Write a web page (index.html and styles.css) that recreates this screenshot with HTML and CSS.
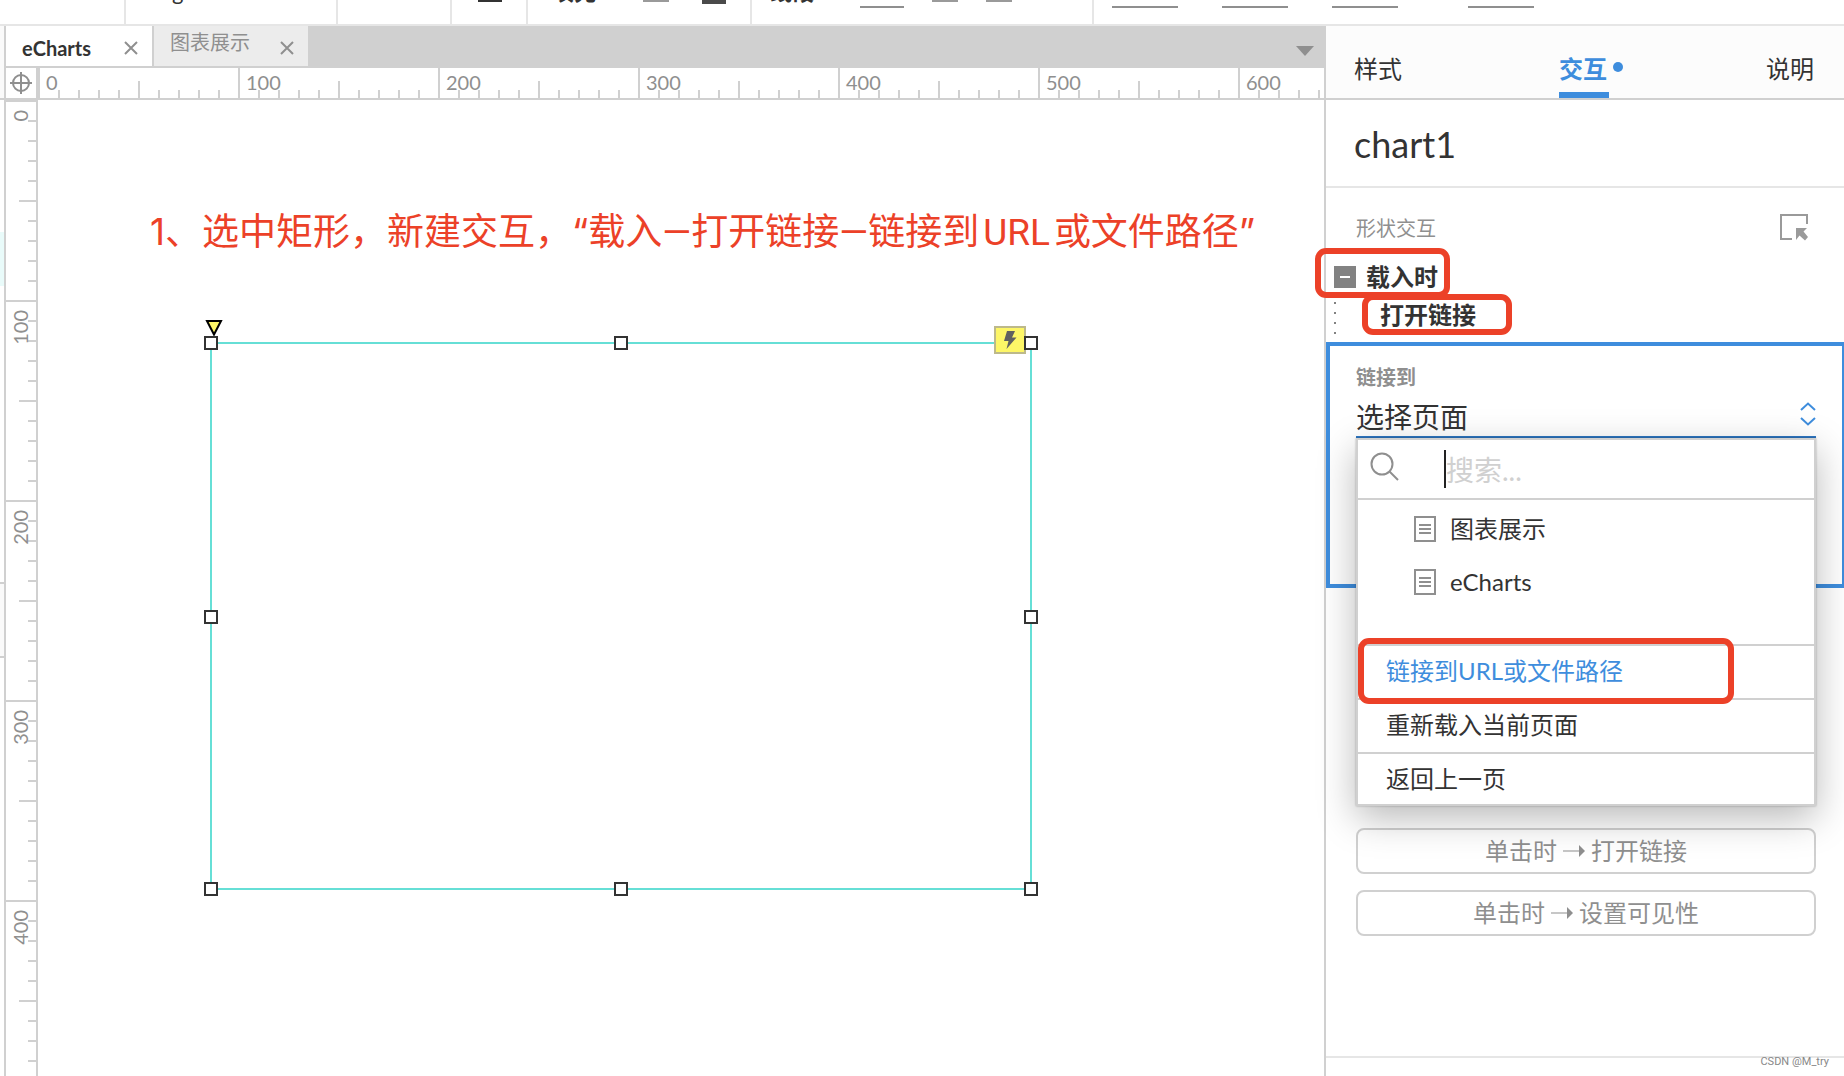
FILE: index.html
```html
<!DOCTYPE html>
<html lang="zh-CN">
<head>
<meta charset="utf-8">
<meta name="viewport" content="width=device-width, initial-scale=1">
<title>eCharts</title>
<link rel="stylesheet" href="styles.css">
</head>
<body>
<div class="app">
  <header class="toolbar">
    <div class="group g-nav"></div>
    <div class="group g-font"><span class="tool-text">g</span></div>
    <div class="group g-size"></div>
    <div class="group g-color"><i class="swatch ink"></i></div>
    <div class="group g-fill"><b class="tool-text">填充</b><i class="swatch"></i><i class="swatch dark"></i></div>
    <div class="group g-line"><b class="tool-text">线段</b><i class="field short"></i><i class="swatch"></i><i class="swatch"></i></div>
    <div class="group g-pos"><i class="field"></i><i class="field"></i><i class="field"></i><i class="field"></i></div>
  </header>

  <div class="workspace">
    <aside class="edge">
      <i class="edge-head"></i><i class="edge-gap"></i><i class="edge-selected"></i><i class="edge-gap tall"></i><i class="edge-panel"></i>
    </aside>

    <main class="editor">
      <nav class="tabs">
        <div class="tab active">
          <button class="tab-name">eCharts</button>
          <button class="close" aria-label="关闭 eCharts"><svg width="14" height="14" viewBox="0 0 14 14"><path d="M1 1 13 13M13 1 1 13"/></svg></button>
        </div>
        <div class="tab">
          <button class="tab-name">图表展示</button>
          <button class="close" aria-label="关闭 图表展示"><svg width="14" height="14" viewBox="0 0 14 14"><path d="M1 1 13 13M13 1 1 13"/></svg></button>
        </div>
        <button class="more" aria-label="更多"><svg width="18" height="10" viewBox="0 0 18 10"><path d="M0 0H18L9 10Z"/></svg></button>
      </nav>
      <div class="ruler-row">
        <div class="origin"><svg width="24" height="24" viewBox="0 0 24 24"><circle cx="12" cy="12" r="8"/><path d="M12 1V23M1 12H23"/></svg></div>
        <div class="ruler-x"><span>0</span><span>100</span><span>200</span><span>300</span><span>400</span><span>500</span><span>600</span></div>
      </div>
      <div class="stage">
        <div class="ruler-y">
          <div class="seg"><span>0</span></div><div class="seg"><span>100</span></div><div class="seg"><span>200</span></div><div class="seg"><span>300</span></div><div class="seg"><span>400</span></div>
        </div>
        <div class="canvas">
          <p class="note">1、选中矩形，新建交互，“载入<span class="dash">—</span>打开链接<span class="dash">—</span>链接到<span class="latin">URL</span>或文件路径”</p>
          <div class="shape">
            <svg class="radius-grip" width="18" height="18" viewBox="0 0 18 18"><path d="M2 2H16L9 15.500Z"/></svg>
            <span class="bolt"><svg width="14" height="18" viewBox="0 0 14 18"><path d="M4 0H12L9 6.500H13.500L3.500 18 5.500 10H1Z"/></svg></span>
            <i class="handle nw"></i><i class="handle n"></i><i class="handle ne"></i>
            <i class="handle w"></i><i class="handle e"></i>
            <i class="handle sw"></i><i class="handle s"></i><i class="handle se"></i>
          </div>
        </div>
      </div>
    </main>

    <aside class="panel">
      <nav class="panel-tabs">
        <button>样式</button>
        <button class="current">交互</button>
        <button>说明</button>
      </nav>
      <h1 class="widget-name">chart1</h1>
      <section class="events">
        <div class="events-head">
          <h2>形状交互</h2>
          <svg width="28" height="28" viewBox="0 0 28 28"><path class="frame" d="M12 25H1V1H27V10"/><path class="arrow" d="M16 14H27L23.500 17.500 28 23 25 26.500 19.500 21.500 16 26Z"/></svg>
        </div>
        <div class="event">
          <button class="collapse" aria-label="折叠"></button>
          <strong>载入时</strong>
          <i class="mark mark-event"></i>
        </div>
        <div class="action">
          <strong>打开链接</strong>
          <i class="mark mark-action"></i>
        </div>
      </section>
      <section class="link-editor">
        <label for="target">链接到</label>
        <div class="select-row">
          <select id="target"><option>选择页面</option></select>
          <svg width="16" height="24" viewBox="0 0 16 24"><path d="M1 8 8 1.500 15 8M1 16 8 22.500 15 16"/></svg>
        </div>
        <div class="menu">
          <div class="search">
            <svg width="30" height="30" viewBox="0 0 30 30"><circle cx="12" cy="12" r="10.500"/><path d="M19.500 19.500 28 28"/></svg>
            <i class="caret"></i>
            <input type="text" placeholder="搜索..." aria-label="搜索">
          </div>
          <div class="pages">
            <button><svg width="22" height="26" viewBox="0 0 22 26"><path d="M1 1H21V25H1ZM5 9H17M5 13H17M5 17H17"/></svg>图表展示</button>
            <button><svg width="22" height="26" viewBox="0 0 22 26"><path d="M1 1H21V25H1ZM5 9H17M5 13H17M5 17H17"/></svg>eCharts</button>
          </div>
          <button class="option chosen">链接到URL或文件路径</button>
          <button class="option">重新载入当前页面</button>
          <button class="option">返回上一页</button>
          <i class="mark mark-url"></i>
        </div>
      </section>
      <section class="suggestions">
        <button>单击时<svg width="22" height="12" viewBox="0 0 22 12"><path class="shaft" d="M0 6H17"/><path class="tip" d="M16 0 22 6 16 12Z"/></svg>打开链接</button>
        <button>单击时<svg width="22" height="12" viewBox="0 0 22 12"><path class="shaft" d="M0 6H17"/><path class="tip" d="M16 0 22 6 16 12Z"/></svg>设置可见性</button>
      </section>
      <footer class="credit">CSDN @M_try</footer>
    </aside>
  </div>
</div>
</body>
</html>
```
FILE: styles.css
```css
:root {
  --line: #d0d0d0;
  --soft: #e6e6e6;
  --ink: #333;
  --muted: #8f8f8f;
  --blue: #3e8ddd;
  --red: #ec4128;
  --teal: #66dfd6;
}

* { box-sizing: border-box; }

body {
  margin: 0;
  background: #fff;
  color: var(--ink);
  font: 24px/32px Lato, "Noto Sans CJK SC", sans-serif;
}

button, input, select {
  margin: 0;
  padding: 0;
  border: 0;
  background: none;
  color: inherit;
  font: inherit;
}

svg { display: block; flex: none; fill: none; }

.app {
  display: flex;
  flex-direction: column;
  height: 100vh;
  overflow: hidden;
}

/* Toolbar: only its lower edge is scrolled into view */
.toolbar {
  display: flex;
  flex: none;
  height: 26px;
  border-bottom: 2px solid var(--soft);
  overflow: hidden;
}
.group {
  display: flex;
  flex: none;
  align-items: flex-start;
  border-right: 2px solid var(--soft);
}
.g-nav { width: 126px; }
.g-font { width: 212px; padding-left: 46px; }
.g-size { width: 114px; }
.g-color { width: 76px; padding-left: 26px; }
.g-fill { width: 224px; padding-left: 24px; }
.g-line { width: 342px; padding-left: 18px; }
.g-pos { flex: 1; padding-left: 18px; gap: 44px; border: 0; }
.g-fill .swatch { margin-left: 33px; }
.g-fill .tool-text { margin-right: 14px; }
.g-line .tool-text { margin-right: 46px; }
.g-line .swatch { margin-left: 28px; }
.g-pos .field:last-child { margin-left: 26px; }
.tool-text { font-size: 22px; line-height: 24px; margin-top: -20px; }
.swatch { width: 26px; height: 2px; background: #9a9a9a; }
.swatch.ink { width: 24px; background: var(--ink); }
.swatch.dark { width: 24px; height: 4px; background: #4a4a4a; }
.field { width: 66px; height: 8px; border-bottom: 2px solid var(--muted); }
.field.short { width: 44px; }

.workspace { display: flex; flex: 1; min-height: 0; }

.edge { display: flex; flex-direction: column; flex: none; width: 4px; }
.edge-head { height: 74px; background: #fafafa; border-bottom: 2px solid var(--line); }
.edge-gap { height: 132px; }
.edge-gap.tall { height: 296px; }
.edge-selected { height: 54px; background: #e9fbfa; }
.edge-panel { height: 76px; background: #fafafa; border: solid var(--line); border-width: 2px 0; }

.editor {
  display: flex;
  flex-direction: column;
  flex: 1;
  min-width: 0;
  border-left: 2px solid var(--line);
}

.tabs { display: flex; flex: none; height: 42px; background: var(--line); border-bottom: 2px solid var(--line); }
.tab {
  display: flex;
  align-items: flex-start;
  justify-content: space-between;
  width: 148px;
  padding: 0 14px 0 16px;
  background: #fff;
  border-right: 2px solid var(--line);
  font-size: 20px;
}
.tab:not(.active) { width: 154px; background: #ececec; color: var(--muted); border: 0; }
.tab-name { line-height: 32px; }
.tab.active .tab-name { padding-top: 6px; font-weight: 700; }
.close { padding-top: 15px; }
.close path { stroke: var(--muted); stroke-width: 2; }
.more { margin: 0 10px 0 auto; padding-top: 10px; }
.more path { fill: var(--muted); }

.ruler-row { display: flex; flex: none; height: 32px; border-bottom: 2px solid var(--line); }
.origin { display: grid; place-items: center; flex: none; width: 32px; border-right: 2px solid var(--line); }
.origin svg { stroke: var(--muted); stroke-width: 2; }
.ruler-x { display: flex; flex: 1; min-width: 0; overflow: hidden; color: var(--muted); font-size: 20px; line-height: 28px; }
.ruler-x span {
  flex: none;
  width: 200px;
  padding-left: 6px;
  border-left: 2px solid var(--line);
  background:
    linear-gradient(var(--line), var(--line)) 98px 100% / 2px 17px no-repeat,
    repeating-linear-gradient(90deg, transparent 0 18px, var(--line) 18px 20px) 0 100% / 198px 8px no-repeat;
}

.stage { display: flex; flex: 1; min-height: 0; }
.ruler-y { flex: none; width: 32px; overflow: hidden; border-right: 2px solid var(--line); color: var(--muted); font-size: 20px; line-height: 28px; }
.seg {
  height: 200px;
  padding-top: 8px;
  border-top: 2px solid var(--line);
  background:
    linear-gradient(var(--line), var(--line)) 100% 98px / 17px 2px no-repeat,
    repeating-linear-gradient(transparent 0 18px, var(--line) 18px 20px) 100% 0 / 8px 198px no-repeat;
}
.seg span { display: block; width: 28px; writing-mode: vertical-rl; transform: rotate(180deg); text-align: right; }

.canvas { flex: 1; min-width: 0; overflow: hidden; padding: 106px 0 0 112px; }
.note {
  height: 52px;
  margin: 0 0 84px;
  color: var(--red);
  font: 37px/52px Inter, "Noto Sans CJK SC", sans-serif;
  white-space: nowrap;
}
.dash { font-family: Roboto, sans-serif; }
.latin { padding: 0 4px; font-family: Roboto, sans-serif; }
.shape { position: relative; width: 822px; height: 548px; margin-left: 60px; border: 2px solid var(--teal); }
.handle { position: absolute; width: 14px; height: 14px; background: #fff; border: 2px solid var(--ink); }
.nw, .n, .ne { top: -8px; }
.w, .e { top: calc(50% - 6px); }
.sw, .s, .se { bottom: -8px; }
.nw, .w, .sw { left: -8px; }
.n, .s { left: calc(50% - 7px); }
.ne, .e, .se { right: -8px; }
.radius-grip { position: absolute; top: -25px; left: -7px; fill: #fdf667; stroke: #000; stroke-width: 2; }
.bolt {
  position: absolute;
  top: -18px;
  right: 4px;
  display: grid;
  place-items: center;
  width: 32px;
  height: 28px;
  background: #fdf667;
  border: 2px solid #bdb98a;
}
.bolt path { fill: #606060; }

.panel { display: flex; flex-direction: column; flex: none; width: 520px; border-left: 2px solid var(--line); }
.panel-tabs {
  display: flex;
  flex: none;
  justify-content: space-between;
  height: 74px;
  padding: 0 30px 0 28px;
  background: #fcfcfc;
  border-bottom: 2px solid var(--line);
}
.panel-tabs button { padding-top: 14px; }
.panel-tabs .current { position: relative; width: 50px; border-bottom: 6px solid var(--blue); padding-top: 20px; color: var(--blue); font-weight: 700; text-align: left; }
.current::after { content: ""; position: absolute; top: 36px; left: 54px; width: 10px; height: 10px; border-radius: 50%; background: var(--blue); }

.widget-name { flex: none; height: 88px; margin: 0; padding-left: 28px; border-bottom: 2px solid var(--soft); font-size: 36px; font-weight: 400; line-height: 88px; }

.events { flex: none; height: 154px; padding: 24px 36px 0 8px; }
.events-head { display: flex; justify-content: space-between; height: 46px; padding-left: 22px; color: var(--muted); }
.events-head h2 { margin: 0; font-size: 20px; font-weight: 400; }
.events-head svg { margin-top: 2px; }
.frame { stroke: #9a9a9a; stroke-width: 2; }
.arrow { fill: #9a9a9a; }
.event, .action { position: relative; display: flex; align-items: center; }
.event { gap: 10px; height: 38px; }
.action { padding: 0 0 4px 46px; height: 42px; background: repeating-linear-gradient(#828282 0 2px, transparent 2px 10px) 0 6px / 2px 100% no-repeat; }
.collapse { display: grid; place-items: center; width: 22px; height: 22px; background: #828282; }
.collapse::before { content: ""; width: 10px; height: 2px; background: #fff; }
.mark { position: absolute; border: 6px solid var(--red); border-radius: 11px; pointer-events: none; }
.mark-event { left: -19px; top: -10px; width: 135px; height: 50px; }
.mark-action { left: 28px; top: -2px; width: 150px; height: 41px; }

.link-editor { position: relative; flex: none; height: 246px; padding: 15px 26px 0; border: 4px solid var(--blue); border-right-width: 2px; }
.link-editor label { display: block; color: var(--muted); font-size: 20px; font-weight: 700; }
.select-row { display: flex; align-items: center; justify-content: space-between; height: 45px; border-bottom: 2px solid #2f78c4; }
.select-row select { flex: 1; appearance: none; padding-top: 4px; font-size: 28px; line-height: 40px; }
.select-row svg { margin-bottom: 2px; stroke: var(--blue); stroke-width: 2; }

.menu {
  position: absolute;
  top: 92px;
  left: 26px;
  right: 26px;
  z-index: 2;
  background: #fff;
  border: 2px solid var(--line);
  box-shadow: 0 0 2px rgba(0, 0, 0, .3), 0 12px 36px rgba(0, 0, 0, .28);
}
.search { display: flex; align-items: center; height: 60px; padding-left: 12px; border-bottom: 2px solid var(--line); }
.search svg { margin-bottom: 4px; stroke: var(--muted); stroke-width: 2; }
.caret { width: 2px; height: 38px; margin-left: 44px; background: #222; }
.search input { flex: 1; min-width: 0; padding-top: 2px; font-size: 28px; line-height: 40px; }
.search input::placeholder { color: var(--line); opacity: 1; }
.pages { height: 144px; padding: 3px 0 0 56px; }
.pages button { display: flex; align-items: center; gap: 14px; width: 100%; height: 53px; line-height: 28px; padding-bottom: 1px; }
.pages svg path { stroke: var(--muted); stroke-width: 2; }
.option { display: block; width: 100%; height: 54px; padding: 0 0 2px 28px; border-top: 2px solid var(--line); text-align: left; }
.option:nth-last-child(2) { height: 52px; padding-bottom: 0; }
.chosen { color: var(--blue); }
.mark-url { left: 0; top: 198px; width: 376px; height: 66px; }

.suggestions { display: flex; flex-direction: column; flex: 1; gap: 16px; padding: 240px 28px 0 30px; border-bottom: 2px solid var(--soft); color: var(--muted); }
.suggestions button { display: flex; align-items: center; justify-content: center; gap: 6px; height: 46px; border: 2px solid var(--line); border-radius: 8px; }
.shaft { stroke: var(--muted); stroke-width: 1; }
.tip { fill: var(--muted); }

.credit { flex: none; height: 18px; padding-right: 15px; color: #888; font: 11px/8px Roboto, sans-serif; text-align: right; }
```
